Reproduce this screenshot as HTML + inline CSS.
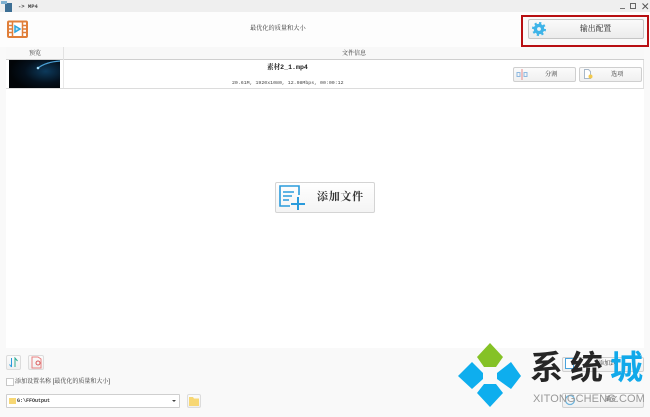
<!DOCTYPE html>
<html><head><meta charset="utf-8">
<style>
html,body{margin:0;padding:0}
body{width:650px;height:417px;position:relative;overflow:hidden;background:#f9f9f9;font-family:"Liberation Sans","Noto Serif CJK SC",serif;color:#333}
.a{position:absolute}
.t{position:absolute;white-space:nowrap;line-height:1}
.btn{position:absolute;box-sizing:border-box;border:1px solid #cfcfcf;border-radius:2px;background:linear-gradient(#fbfbfb,#f0f0f0)}
.m{font-family:"Liberation Mono","Noto Serif CJK SC",monospace}
</style></head><body>
<div class="a" style="left:0;top:0;width:650px;height:12px;background:#efefef"></div>
<div class="a" style="left:0;top:12px;width:650px;height:35px;background:#fdfdfd"></div>
<svg class="a" style="left:1px;top:0" width="12" height="12"><rect x="4" y="3" width="7" height="9" fill="#3d6f95"/><rect x="0" y="1" width="6" height="3" fill="#7fb0d0"/></svg>
<div class="t m" style="left:18px;top:4px;font-size:5.5px;color:#444;font-weight:bold">-> MP4</div>
<div class="a" style="left:620px;top:8px;width:5px;height:1px;background:#777"></div>
<div class="a" style="left:630px;top:3px;width:4px;height:4px;border:1px solid #666"></div>
<svg class="a" style="left:642px;top:3px" width="7" height="7"><path d="M0.5 .5L6 6M6 .5L.5 6" stroke="#555" fill="none"/></svg>
<svg class="a" style="left:7px;top:20px" width="21" height="18" viewBox="0 0 21 18">
<rect x="1" y="1.5" width="19" height="15.5" rx="1" fill="#fff" stroke="#e07f3a" stroke-width="2"/>
<path d="M5.5 1V17M15.5 1V17M1 5.5H5.5M1 9H5.5M1 12.5H5.5M15.5 5.5H20M15.5 9H20M15.5 12.5H20" stroke="#e07f3a" stroke-width="1.5" fill="none"/>
<path d="M8 6L13 9L8 12Z" fill="#bfe4f6" stroke="#2da4dc" stroke-width="1.5"/></svg>
<div class="t" style="left:250px;top:26px;font-size:6.2px;color:#333">最优化的质量和大小</div>
<div class="a" style="left:521px;top:15px;width:128px;height:32px;box-sizing:border-box;border:2px solid #b80f12;background:#fafafa"></div>
<div class="btn" style="left:528px;top:19px;width:116px;height:20px;border-color:#c6c6c6;background:linear-gradient(#fafafa,#ececec)"></div>
<svg class="a" style="left:532px;top:22px" width="14" height="14" viewBox="0 0 14 14"><circle cx="7" cy="7" r="3.6" fill="none" stroke="#3fb4e8" stroke-width="3.4"/><circle cx="7" cy="7" r="6" fill="none" stroke="#3fb4e8" stroke-width="2" stroke-dasharray="2.2 2.5"/></svg>
<div class="t" style="left:580px;top:25px;font-size:7.8px;color:#222">输出配置</div>
<div class="a" style="left:6px;top:47px;width:638px;height:13px;background:#f8f8f8;border-bottom:1px solid #cfcfcf;box-sizing:border-box"></div>
<div class="a" style="left:63px;top:47px;width:1px;height:13px;background:#e2e2e2"></div>
<div class="t" style="left:29px;top:51px;font-size:6px;color:#333">预览</div>
<div class="t" style="left:342px;top:51px;font-size:6px;color:#333">文件信息</div>
<div class="a" style="left:6px;top:60px;width:638px;height:29px;background:#fff;border-bottom:1px solid #dcdcdc;border-right:1px solid #e0e0e0;box-sizing:border-box"></div>
<div class="a" style="left:63px;top:60px;width:1px;height:28px;background:#e8e8e8"></div>
<svg class="a" style="left:9px;top:60px" width="51" height="28" viewBox="0 0 51 28"><defs><radialGradient id="g" cx=".72" cy=".4" r=".7"><stop offset="0" stop-color="#0d3a5c"/><stop offset=".6" stop-color="#04101c"/><stop offset="1" stop-color="#020508"/></radialGradient></defs><rect width="51" height="28" fill="url(#g)"/><path d="M29 8Q37 2 51 1" stroke="#4a9fd4" stroke-width="1.3" fill="none"/><circle cx="29" cy="8" r="1.3" fill="#9fd8f5"/></svg>
<div class="t m" style="left:267px;top:65px;font-size:6.6px;font-weight:bold;color:#222">素材2_1.mp4</div>
<div class="t m" style="left:232px;top:82px;font-size:4.9px;color:#444">20.61M, 1920x1080, 12.98Mbps, 00:00:12</div>
<div class="btn" style="left:513px;top:67px;width:63px;height:15px"></div>
<svg class="a" style="left:516px;top:69px" width="12" height="11"><path d="M1 3.5h3v4H1zM8 3.5h3v4H8z" fill="none" stroke="#8db8e0"/><path d="M6 0V11" stroke="#e58a8a"/></svg>
<div class="t" style="left:545px;top:72px;font-size:6.2px;color:#333">分割</div>
<div class="btn" style="left:579px;top:67px;width:63px;height:15px"></div>
<svg class="a" style="left:583px;top:69px" width="11" height="11"><path d="M1.5 .5h4l2 2v7h-6z" fill="#fff" stroke="#a8b8c8"/><circle cx="7.5" cy="7.5" r="2" fill="#f2c94c"/></svg>
<div class="t" style="left:611px;top:72px;font-size:6.2px;color:#333">选项</div>
<div class="a" style="left:6px;top:89px;width:638px;height:259px;background:#fff"></div>
<div class="btn" style="left:275px;top:182px;width:100px;height:31px;border-color:#d4d4d4;background:linear-gradient(#fff,#f4f4f4)"></div>
<svg class="a" style="left:278px;top:184px" width="28" height="27" viewBox="0 0 28 27">
<path d="M21 11V2H2V22H12" fill="none" stroke="#2a9bdc" stroke-width="1.6"/>
<path d="M5 8H16M5 12H14M5 16H11" stroke="#2a9bdc" stroke-width="1.4"/>
<path d="M20 13V26M13 20H27" stroke="#2a9bdc" stroke-width="2"/></svg>
<div class="t" style="left:317px;top:192px;font-size:11px;font-weight:bold;letter-spacing:.7px;color:#333">添加文件</div>
<div class="btn" style="left:6px;top:355px;width:15px;height:15px;border-color:#dcdcdc"></div>
<svg class="a" style="left:8px;top:357px" width="11" height="11"><path d="M3.5 1V10M1.5 7.5L3.5 10" stroke="#2a9bdc" fill="none"/><path d="M7 10V1L9.5 4" stroke="#2cab95" fill="none"/></svg>
<div class="btn" style="left:28px;top:355px;width:16px;height:15px;border-color:#dcdcdc"></div>
<svg class="a" style="left:30px;top:356px" width="13" height="13"><path d="M2 1h6l3 2v9H2z" fill="none" stroke="#e88080"/><circle cx="8" cy="7" r="2" fill="none" stroke="#d95a5a"/></svg>
<div class="a" style="left:6px;top:378px;width:6px;height:6px;border:1px solid #c8c8c8;background:#fff"></div>
<div class="t" style="left:15px;top:379px;font-size:6px;color:#333">添加设置名称 [最优化的质量和大小]</div>
<div class="a" style="left:6px;top:394px;width:174px;height:14px;box-sizing:border-box;border:1px solid #cfcfcf;background:#fff;border-radius:1px"></div>
<div class="a" style="left:9px;top:398px;width:7px;height:6px;background:#f7d774"></div>
<div class="t m" style="left:17px;top:399px;font-size:5px;font-weight:bold;color:#333">G:\FFOutput</div>
<div class="a" style="left:172px;top:400px;border-left:2px solid transparent;border-right:2px solid transparent;border-top:2px solid #444"></div>
<div class="btn" style="left:187px;top:394px;width:14px;height:14px;border-color:#dcdcdc"></div>
<svg class="a" style="left:189px;top:397px" width="10" height="9"><path d="M0 0h4l1 1.5h5V9H0z" fill="#f7d774"/></svg>
<div class="btn" style="left:562px;top:357px;width:82px;height:15px;border-color:#d0d0d0"></div>
<svg class="a" style="left:565px;top:358px" width="10" height="12"><rect x=".5" y=".5" width="8" height="10" fill="#fff" stroke="#4aa3dc"/></svg>
<div class="t" style="left:598px;top:361px;font-size:6px;color:#333">添加到</div>
<div class="btn" style="left:562px;top:393px;width:82px;height:15px;border-color:#d0d0d0"></div>
<svg class="a" style="left:564px;top:394px" width="12" height="12"><circle cx="6" cy="6" r="4.5" fill="none" stroke="#6fb5dd" stroke-width="1.3"/></svg>
<div class="t" style="left:605px;top:397px;font-size:6px;color:#333">确定</div>
<svg class="a" style="left:0;top:0" width="650" height="417">
<path d="M490 343L503 357L496 367H484L477 357Z" fill="#85c226"/>
<path d="M472 362L483 373V379L472 389L458 376Z" fill="#0eaeee"/>
<path d="M511 362L521 376L511 389L497 379V373Z" fill="#0eaeee"/>
<path d="M484 384H496L503 393L490 407L477 393Z" fill="#0eaeee"/></svg>
<div class="t" style="left:530px;top:349px;font-size:33px;color:#262626;font-family:'Noto Sans CJK SC',sans-serif;font-weight:700;letter-spacing:7px">系统<span style="color:#11a9ea">城</span></div>
<div class="t" style="left:533px;top:394px;font-size:11px;letter-spacing:.1px;color:#999;font-family:'Liberation Sans',sans-serif">XITONGCHENG.COM</div>
</body></html>
